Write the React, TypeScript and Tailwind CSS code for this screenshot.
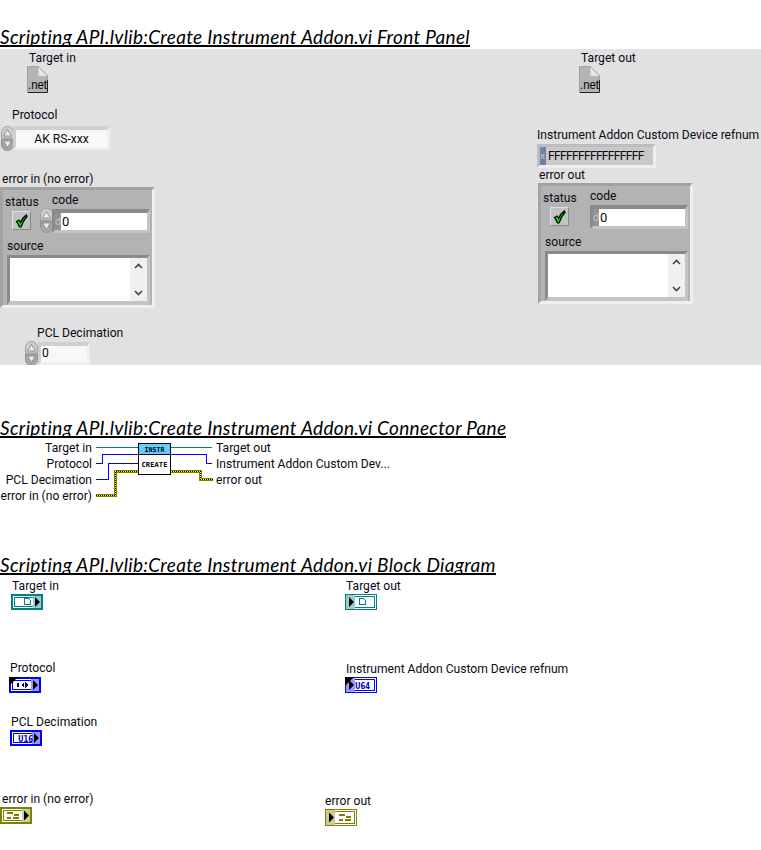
import React from "react";

const labelFont = "font-['Roboto','Noto_Sans',sans-serif] text-[12.1px] leading-[14px] whitespace-nowrap text-[#0a0a14]";

function Label({ className, children }: { className: string; children: React.ReactNode }) {
  return <div className={`absolute ${labelFont} ${className}`}>{children}</div>;
}

function Heading({ children, className }: { children: React.ReactNode; className: string }) {
  return (
    <div className={className}>
      <h2 className="w-fit border-b-2 border-black font-['Lato',sans-serif] italic font-normal text-[19px] leading-[16px] tracking-[0.3px] text-black whitespace-nowrap">
        {children}
      </h2>
    </div>
  );
}

function NetIcon({ className }: { className: string }) {
  return (
    <svg className={`absolute ${className}`} width="21" height="27" viewBox="0 0 21 27">
      <path d="M0.5 0.5H11.5L20.5 10V26.5H0.5Z" fill="#b4b4b4" stroke="#a0a0a0" />
      <path d="M11.5 1L11.5 10H20Z" fill="#e6e6e6" />
      <path d="M20.5 14V26.5H1" fill="none" stroke="#202020" />
      <text x="1" y="23" fontSize="12" fontFamily="Liberation Sans" fill="#000" textLength="19" lengthAdjust="spacingAndGlyphs">.net</text>
    </svg>
  );
}

function Spinner({ className = "" }: { className?: string }) {
  return (
    <svg className={`shrink-0 ${className}`} width="13" height="25" viewBox="0 0 13 25">
      <path d="M0.5 12V7C0.5 3 3 0.5 6.5 0.5S12.5 3 12.5 7V12Z" fill="#cdcdcd" stroke="#a0a0a0" />
      <path d="M0.5 13V18C0.5 22 3 24.5 6.5 24.5S12.5 22 12.5 18V13Z" fill="#a6a6a6" stroke="#909090" />
      <path d="M6.5 3.5L2.5 10H10.5Z" fill="#ececec" stroke="#808080" strokeWidth="0.8" />
      <path d="M6.5 21.5L2.5 15H10.5Z" fill="#ececec" stroke="#808080" strokeWidth="0.8" />
    </svg>
  );
}

function StatusButton() {
  return (
    <div className="w-[19px] h-[19px] bg-[#c2c2c2] border border-t-[#e0e0e0] border-l-[#e0e0e0] border-r-[#8a8a8a] border-b-[#8a8a8a] flex items-center justify-center">
      <svg width="13" height="14" viewBox="0 0 13 14">
        <path d="M1.5 7.5L4 6L5.5 8.5C7 5 9 2.5 11.5 1L12 2.5C9.5 5 7.5 8.5 6 13H4.5C3.8 11 2.8 9 1.5 7.5Z" fill="#00ff00" stroke="#000" strokeWidth="1.2" />
      </svg>
    </div>
  );
}

function Chevron({ up }: { up?: boolean }) {
  return (
    <svg width="9" height="6" viewBox="0 0 9 6">
      <path d={up ? "M1 5L4.5 1.5L8 5" : "M1 1L4.5 4.5L8 1"} fill="none" stroke="#444" strokeWidth="1.6" />
    </svg>
  );
}

function ErrorCluster({ className, spinner }: { className: string; spinner?: boolean }) {
  return (
    <div className={`absolute w-[155px] h-[121px] bg-[#b3b3b3] border-[3px] border-t-[#a3a3a3] border-l-[#a3a3a3] border-r-[#efefef] border-b-[#efefef] ${className}`}>
      <div className="flex h-[43px]">
        <div className="w-[37px] pl-[2px] pt-[5px]">
          <div className={labelFont}>status</div>
          <div className="ml-[7px] mt-[2px]"><StatusButton /></div>
        </div>
        <div className="flex-1 pt-[3px] relative">
          <div className={`${labelFont} ml-[12px]`}>code</div>
          <div className="flex items-center mt-[2px]">
            {spinner ? <Spinner className="-mt-[1px]" /> : <div className="w-[12px]" />}
            <div className={`${spinner ? "-ml-[1px]" : ""} w-[98px] h-[24px] border-[3px] border-t-[#8a8a8a] border-l-[#8a8a8a] border-r-[#c4c4c4] border-b-[#c4c4c4] border-t-[4px] flex`}>
              <div className="w-[6px] bg-[#929292] text-[#c8c8c8] text-[10px] leading-[17px] font-['Noto_Sans',sans-serif]">d</div>
              <div className={`flex-1 bg-white ${labelFont} text-[13px] leading-[17px] pl-[1px]`}>0</div>
            </div>
          </div>
        </div>
      </div>
      <div className={`${labelFont} ml-[4px] mt-[6px]`}>source</div>
      <div className="ml-[4px] mt-[2px] w-[143px] h-[50px] border-[3px] border-t-[#8a8a8a] border-l-[#8a8a8a] border-r-[#c4c4c4] border-b-[#c4c4c4] border-b-[4px] flex bg-white">
        <div className="flex-1" />
        <div className="w-[17px] bg-[#f0f0f0] flex flex-col items-center justify-between py-[5px]">
          <Chevron up />
          <Chevron />
        </div>
      </div>
    </div>
  );
}

function Wires({ className, w, h, children }: { className: string; w: number; h: number; children: React.ReactNode }) {
  return (
    <svg className={`absolute ${className}`} width={w} height={h} viewBox={`0 0 ${w} ${h}`} shapeRendering="crispEdges">
      {children}
    </svg>
  );
}

function ErrorWire({ d }: { d: string }) {
  return (
    <>
      <path d={d} fill="none" stroke="#808000" strokeWidth="3" />
      <path d={d} fill="none" stroke="#000" strokeWidth="1" strokeDasharray="1 1" />
      <path d={d} fill="none" stroke="#ffff00" strokeWidth="1" strokeDasharray="1 1" strokeDashoffset="1" />
    </>
  );
}

type TermKind = "doc" | "enum" | "u16" | "u64" | "err";

function Terminal({ className, color, tint, kind, indicator, corner }: { className: string; color: string; tint: string; kind: TermKind; indicator?: boolean; corner?: boolean }) {
  const W = 32, H = kind === "err" ? 17 : 16;
  const mid = H / 2;
  return (
    <svg className={`absolute ${className}`} width={W} height={H} viewBox={`0 0 ${W} ${H}`} shapeRendering="crispEdges">
      {indicator ? (
        <>
          <rect x="0.5" y="0.5" width={W - 1} height={H - 1} fill="#fff" stroke={color} />
          <rect x="2.5" y="2.5" width={W - 5} height={H - 5} fill="#fff" stroke={color} />
          <rect x="1" y="1" width="9" height={H - 2} fill={tint} />
          <path d={`M4 ${mid - 5}L9 ${mid}L4 ${mid + 5}Z`} fill="#000" shapeRendering="auto" />
        </>
      ) : (
        <>
          <rect x="1" y="1" width={W - 2} height={H - 2} fill="#fff" stroke={color} strokeWidth="2" />
          <rect x="3.5" y="3.5" width={W - 7} height={H - 7} fill="#fff" stroke={color} />
          <rect x={W - 10} y="2" width="8" height={H - 4} fill={tint} />
          <path d={`M${W - 8} ${mid - 5}L${W - 3} ${mid}L${W - 8} ${mid + 5}Z`} fill="#000" shapeRendering="auto" />
        </>
      )}
      {kind === "doc" && (
        <path d={indicator ? "M14.5 4.5H18.5L20.5 6.5V10.5H14.5Z" : "M13.5 4.5H17.5L19.5 6.5V10.5H13.5Z"} fill="none" stroke={color} strokeWidth="1.4" />
      )}
      {kind === "enum" && (
        <>
          <rect x="8" y="6" width="2" height="4" fill="#000080" />
          <path d="M12 8L15 5V11Z M19 8L16 11V5Z" fill="#000080" />
        </>
      )}
      {(kind === "u16" || kind === "u64") && (
        <text x={indicator ? 10 : 8} y="11.5" fontSize="9.5" fontWeight="700" fontFamily="DejaVu Sans" fill="#0000c0" textLength="15" lengthAdjust="spacingAndGlyphs" shapeRendering="auto">
          {kind === "u16" ? "U16" : "U64"}
        </text>
      )}
      {kind === "err" && (
        <g fill={color}>
          <rect x={indicator ? 14 : 7} y="5" width="6" height="2" />
          <rect x={indicator ? 21 : 14} y="7" width="5" height="2" />
          <rect x={indicator ? 14 : 7} y="10" width="4" height="2" />
          <rect x={indicator ? 20 : 13} y="10" width="6" height="2" />
        </g>
      )}
      {corner && <path d="M0 0H9L0 9Z" fill="#000" shapeRendering="auto" />}
    </svg>
  );
}

export default function App() {
  return (
    <div className="w-[761px] h-[850px] bg-white overflow-hidden flex flex-col">
      <Heading className="pt-[29px] h-[49px]">Scripting API.lvlib:Create Instrument Addon.vi Front Panel</Heading>

      {/* Front panel: free canvas, top = 49 */}
      <div className="relative h-[316px] bg-[#e1e1e1] overflow-hidden">
        <Label className="left-[29px] top-[2px]">Target in</Label>
        <NetIcon className="left-[27px] top-[17px]" />
        <Label className="left-[12px] top-[59px]">Protocol</Label>
        <div className="absolute left-[1px] top-[77px]"><Spinner /></div>
        <div className="absolute left-[13px] top-[77px] w-[97px] h-[24px] bg-[#f8f8f8] border-[3px] border-t-[#cfcfcf] border-l-[#cfcfcf] border-r-[#eeeeee] border-b-[#eeeeee] border-t-[4px] flex items-center justify-center">
          <span className={labelFont}>AK RS-xxx</span>
        </div>
        <Label className="left-[2px] top-[123px]">error in (no error)</Label>
        <ErrorCluster className="left-0 top-[138px]" spinner />
        <Label className="left-[37px] top-[277px]">PCL Decimation</Label>
        <div className="absolute left-[25px] top-[292px]"><Spinner /></div>
        <div className={`absolute left-[38px] top-[293px] w-[52px] h-[23px] bg-[#f8f8f8] border-[3px] border-t-[#cfcfcf] border-l-[#cfcfcf] border-r-[#eeeeee] border-b-[#eeeeee] border-t-[4px] pl-[1px] ${labelFont}`}>0</div>

        <Label className="left-[581px] top-[2px]">Target out</Label>
        <NetIcon className="left-[579px] top-[17px]" />
        <Label className="left-[537px] top-[79px]">Instrument Addon Custom Device refnum</Label>
        <div className="absolute left-[537px] top-[95px] w-[119px] h-[24px] bg-[#c9c9c9] border-[3px] border-t-[#bdbdbd] border-l-[#bdbdbd] border-r-[#eeeeee] border-b-[#eeeeee] flex items-stretch">
          <div className="w-[6px] bg-[#6c82a6] text-[#d8d8d8] text-[9px] leading-[17px] font-['Noto_Sans',sans-serif]">x</div>
          <div className={`${labelFont} pl-[2px] leading-[18px] tracking-[-0.7px]`}>FFFFFFFFFFFFFFFF</div>
        </div>
        <Label className="left-[539px] top-[119px]">error out</Label>
        <ErrorCluster className="left-[538px] top-[134px]" />
      </div>

      <Heading className="pt-[55px] h-[75px]">Scripting API.lvlib:Create Instrument Addon.vi Connector Pane</Heading>

      {/* Connector pane: free canvas, top = 440 */}
      <div className="relative h-[65px]">
        <Label className="left-0 w-[92px] text-right top-[1px]">Target in</Label>
        <Label className="left-0 w-[92px] text-right top-[17px]">Protocol</Label>
        <Label className="left-0 w-[92px] text-right top-[33px]">PCL Decimation</Label>
        <Label className="left-0 w-[92px] text-right top-[49px]">error in (no error)</Label>
        <Wires className="left-[96px] top-0" w={120} h={60}>
          <path d="M0 7.5H116" stroke="#008080" fill="none" />
          <path d="M0 23.5H6.5V14.5H110.5V23.5H116" stroke="#0000ff" fill="none" />
          <path d="M0 39.5H12.5V23.5H42" stroke="#0000ff" fill="none" />
          <ErrorWire d="M0 55.5H19.5V31.5H104.5V39.5H117" />
        </Wires>
        <Wires className="left-[138px] top-[3px]" w={33} h={32}>
          <rect x="0.5" y="0.5" width="32" height="31" fill="#fff" stroke="#000" />
          <rect x="1" y="1" width="31" height="10" fill="#66ccff" />
          <path d="M0 11.5H33" stroke="#000" />
          <text x="16.5" y="9" textAnchor="middle" fontSize="7" fontWeight="700" fontFamily="DejaVu Sans Mono" fill="#000" textLength="20" lengthAdjust="spacingAndGlyphs">INSTR</text>
          <text x="16.5" y="23.5" textAnchor="middle" fontSize="7" fontWeight="700" fontFamily="DejaVu Sans Mono" fill="#000" textLength="26" lengthAdjust="spacingAndGlyphs">CREATE</text>
        </Wires>
        <Label className="left-[216px] top-[1px]">Target out</Label>
        <Label className="left-[216px] top-[17px]">Instrument Addon Custom Dev...</Label>
        <Label className="left-[216px] top-[33px]">error out</Label>
      </div>

      <Heading className="pt-[52px] h-[72px]">Scripting API.lvlib:Create Instrument Addon.vi Block Diagram</Heading>

      {/* Block diagram: free canvas, top = 577 */}
      <div className="relative flex-1">
        <Label className="left-[12px] top-[2px]">Target in</Label>
        <Terminal className="left-[11px] top-[17px]" color="#008080" tint="#99cccc" kind="doc" />
        <Label className="left-[10px] top-[84px]">Protocol</Label>
        <Terminal className="left-[9px] top-[100px]" color="#0000ff" tint="#9999ff" kind="enum" corner />
        <Label className="left-[11px] top-[138px]">PCL Decimation</Label>
        <Terminal className="left-[10px] top-[153px]" color="#0000ff" tint="#9999ff" kind="u16" />
        <Label className="left-[2px] top-[215px]">error in (no error)</Label>
        <Terminal className="left-0 top-[230px]" color="#808000" tint="#cccc99" kind="err" />

        <Label className="left-[346px] top-[2px]">Target out</Label>
        <Terminal className="left-[345px] top-[17px]" color="#008080" tint="#99cccc" kind="doc" indicator />
        <Label className="left-[346px] top-[85px]">Instrument Addon Custom Device refnum</Label>
        <Terminal className="left-[345px] top-[100px]" color="#0000ff" tint="#9999ff" kind="u64" indicator corner />
        <Label className="left-[325px] top-[217px]">error out</Label>
        <Terminal className="left-[325px] top-[232px]" color="#808000" tint="#cccc99" kind="err" indicator />
      </div>
    </div>
  );
}
